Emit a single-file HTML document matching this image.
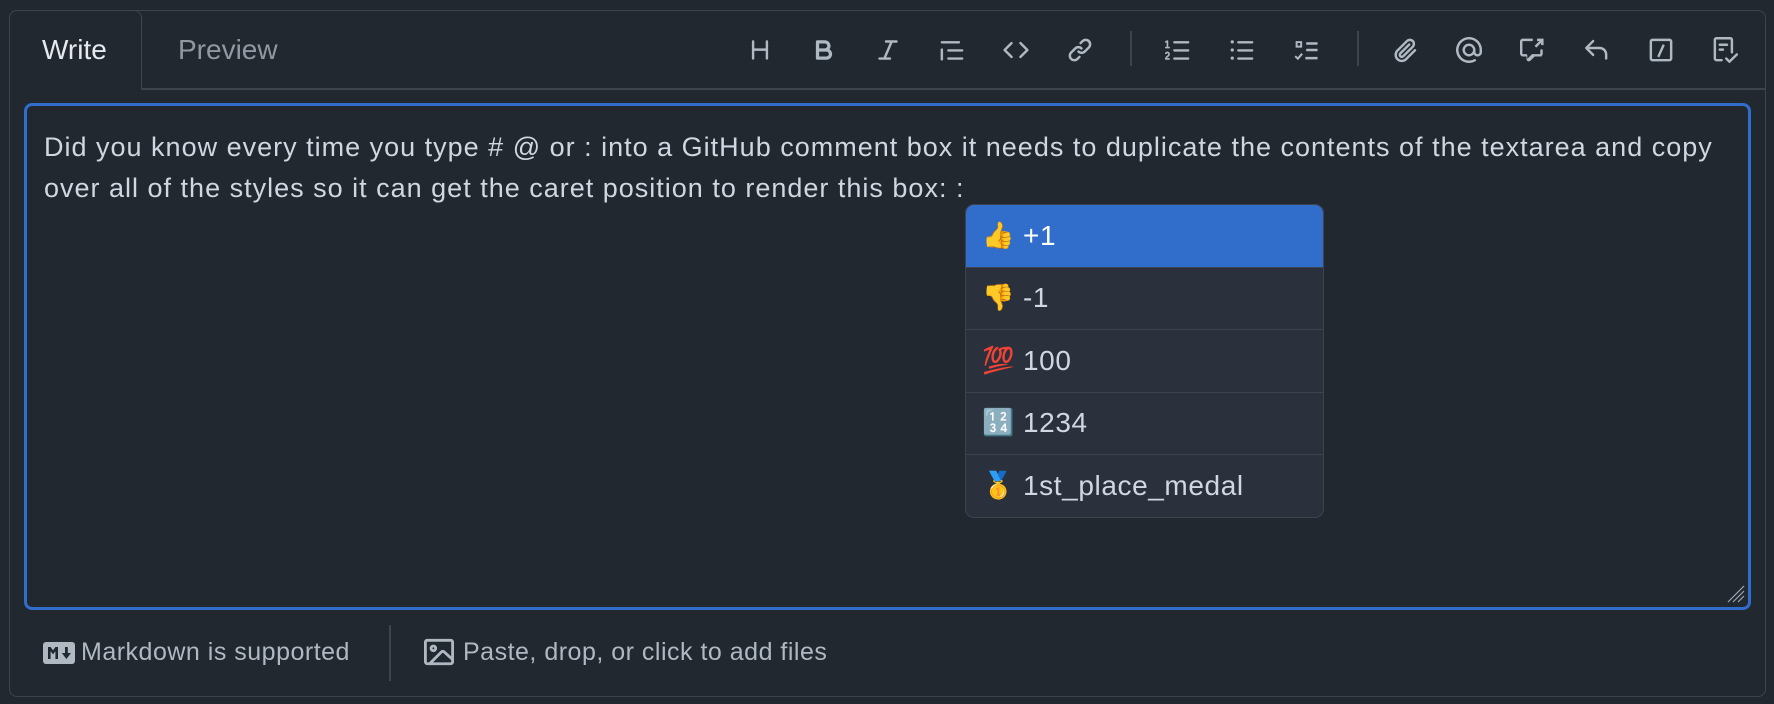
<!DOCTYPE html>
<html><head><meta charset="utf-8"><style>
*{box-sizing:border-box;margin:0;padding:0}
body{width:1774px;height:704px;background:#212830;font-family:"Liberation Sans",sans-serif;position:relative;overflow:hidden;color:#d1d7e0}
.box{position:absolute;left:9px;top:10px;width:1757px;height:687px;border:1.5px solid #3d444d;border-radius:8px}
.hdr{position:absolute;left:9px;top:88px;width:1757px;height:1.5px;background:#3d444d}
.tab{position:absolute;left:9px;top:10px;width:133px;height:80px;border:1.5px solid #3d444d;border-bottom:none;border-radius:8px 8px 0 0;background:#212830}
.t1{position:absolute;left:42px;top:34px;font-size:28px;color:#e6eaef}
.t2{position:absolute;left:178px;top:34px;font-size:28px;color:#9198a1}
.ic{position:absolute;top:37px;width:26px;height:26px;fill:#b0b8c2}
.sep{position:absolute;top:31px;width:1.5px;height:35px;background:#3d444d}
.ta{position:absolute;left:24px;top:103px;width:1727px;height:507px;border:3px solid #316dca;border-radius:8px}
.txt{position:absolute;left:44px;top:127px;font-size:27px;letter-spacing:1px;line-height:41px;color:#d1d7e0;white-space:nowrap}
.pop{position:absolute;left:965px;top:204px;width:359px;height:314px;border:1.5px solid #3d444d;border-radius:9px;background:#2a313c;overflow:hidden}
.row{height:62.5px;border-bottom:1.5px solid #3d444d;display:flex;align-items:center;padding-left:16px;font-size:28px;letter-spacing:0.6px;color:#d1d7e0}
.row:last-child{border-bottom:none}
.row.sel{background:#316dca;color:#fff}
.row .e{width:41px;font-size:26px;font-family:"Noto Color Emoji","DejaVu Sans",sans-serif}
.ft{position:absolute;top:638px;font-size:25px;letter-spacing:0.5px;color:#b0b8c2;display:flex;align-items:center}
.fsep{position:absolute;left:389px;top:625px;width:1.5px;height:56px;background:#3d444d}
</style></head><body>
<div class="box"></div>
<div class="hdr"></div>
<div class="tab"></div>
<div class="t1">Write</div>
<div class="t2">Preview</div>
<svg class="ic" style="left:747px" viewBox="0 0 16 16"><path d="M3.75 2a.75.75 0 0 1 .75.75V7h7V2.75a.75.75 0 0 1 1.5 0v10.5a.75.75 0 0 1-1.5 0V8.5h-7v4.75a.75.75 0 0 1-1.5 0V2.75A.75.75 0 0 1 3.75 2Z"/></svg>
<svg class="ic" style="left:811px" viewBox="0 0 16 16"><path d="M4 2h4.5a3.501 3.501 0 0 1 2.852 5.53A3.499 3.499 0 0 1 9.5 14H4a1 1 0 0 1-1-1V3a1 1 0 0 1 1-1Zm1 7v3h4.5a1.5 1.5 0 0 0 0-3Zm3.5-2a1.5 1.5 0 0 0 0-3H5v3Z"/></svg>
<svg class="ic" style="left:875px" viewBox="0 0 16 16"><path d="M6 2.75A.75.75 0 0 1 6.75 2h6.5a.75.75 0 0 1 0 1.5h-2.505l-3.858 9H9.25a.75.75 0 0 1 0 1.5h-6.5a.75.75 0 0 1 0-1.5h2.505l3.858-9H6.75A.75.75 0 0 1 6 2.75Z"/></svg>
<svg class="ic" style="left:939px" viewBox="0 0 16 16"><path d="M1.75 2.5h10.5a.75.75 0 0 1 0 1.5H1.75a.75.75 0 0 1 0-1.5Zm4 5h8.5a.75.75 0 0 1 0 1.5h-8.5a.75.75 0 0 1 0-1.5Zm0 5h8.5a.75.75 0 0 1 0 1.5h-8.5a.75.75 0 0 1 0-1.5ZM2.5 7.75v6a.75.75 0 0 1-1.5 0v-6a.75.75 0 0 1 1.5 0Z"/></svg>
<svg class="ic" style="left:1003px" viewBox="0 0 16 16"><path d="m11.28 3.22 4.25 4.25a.75.75 0 0 1 0 1.06l-4.25 4.25a.749.749 0 0 1-1.06-1.06L13.940 8l-3.72-3.72a.749.749 0 0 1 1.06-1.06Zm-6.56 0a.751.751 0 0 1 1.06 1.06L2.06 8l3.72 3.72a.749.749 0 0 1-1.06 1.06L.47 8.53a.75.75 0 0 1 0-1.06Z"/></svg>
<svg class="ic" style="left:1067px" viewBox="0 0 16 16"><path d="m7.775 3.275 1.25-1.25a3.5 3.5 0 1 1 4.95 4.95l-2.5 2.5a3.5 3.5 0 0 1-4.95 0 .751.751 0 0 1 1.06-1.060 2 2 0 0 0 2.83 0l2.5-2.5a2.002 2.002 0 0 0-2.83-2.830l-1.25 1.25a.751.751 0 0 1-1.06-1.06Zm-4.69 9.64a2 2 0 0 0 2.83 0l1.25-1.25a.751.751 0 0 1 1.06 1.06l-1.25 1.25a3.5 3.5 0 1 1-4.95-4.95l2.5-2.5a3.5 3.5 0 0 1 4.95 0 .751.751 0 0 1-1.06 1.06 2 2 0 0 0-2.83 0l-2.5 2.5a2 2 0 0 0 0 2.83Z"/></svg>
<div class="sep" style="left:1130px"></div>
<svg class="ic" style="left:1165px" viewBox="0 0 16 16"><path d="M5 3.25a.75.75 0 0 1 .75-.75h8.5a.75.75 0 0 1 0 1.5h-8.5A.75.75 0 0 1 5 3.25Zm0 5a.75.75 0 0 1 .75-.75h8.5a.75.75 0 0 1 0 1.5h-8.5A.75.75 0 0 1 5 8.25Zm0 5a.75.75 0 0 1 .75-.75h8.5a.75.75 0 0 1 0 1.5h-8.5a.75.75 0 0 1-.75-.75ZM.924 10.32a.5.5 0 0 1-.851-.525c.097-.144.215-.273.348-.384.228-.19.588-.392 1.068-.392.468 0 .858.181 1.126.484.259.294.377.673.377 1.038 0 .987-.686 1.495-1.156 1.845l-.047.035c-.303.225-.522.4-.654.597h1.357a.5.5 0 0 1 0 1H.5a.5.5 0 0 1-.5-.5c0-1.005.692-1.52 1.167-1.875l.035-.025c.531-.396.8-.625.8-1.078a.57.57 0 0 0-.128-.376C1.806 10.068 1.695 10 1.5 10a.658.658 0 0 0-.429.163.835.835 0 0 0-.144.153ZM2.003 2.5V6h.503a.5.5 0 0 1 0 1H.5a.5.5 0 0 1 0-1h.503V3.308l-.28.14a.5.5 0 0 1-.446-.895l1.003-.5a.5.5 0 0 1 .723.447Z"/></svg>
<svg class="ic" style="left:1229px" viewBox="0 0 16 16"><path d="M5.75 2.5h8.5a.75.75 0 0 1 0 1.5h-8.5a.75.75 0 0 1 0-1.5Zm0 5h8.5a.75.75 0 0 1 0 1.5h-8.5a.75.75 0 0 1 0-1.5Zm0 5h8.5a.75.75 0 0 1 0 1.5h-8.5a.75.75 0 0 1 0-1.5ZM2 14a1 1 0 1 1 0-2 1 1 0 0 1 0 2Zm1-6a1 1 0 1 1-2 0 1 1 0 0 1 2 0ZM2 4a1 1 0 1 1 0-2 1 1 0 0 1 0 2Z"/></svg>
<svg class="ic" style="left:1294px" viewBox="0 0 16 16"><path d="M1 2.5h4v4H1Zm1.2 1.2v1.6h1.6V3.7ZM7.5 3.25h7v1.5h-7Zm0 4h7v1.5h-7Zm-.5 5h7.5v1.5H7Zm-5.8-.9 1.1 1.1 2.2-2.6 1 .9-3.1 3.5-2.1-2Z"/></svg>
<div class="sep" style="left:1357px"></div>
<svg class="ic" style="left:1392px" viewBox="0 0 16 16"><path d="M12.212 3.02a1.753 1.753 0 0 0-2.478.003l-5.83 5.83a3.007 3.007 0 0 0-.88 2.127c0 .795.315 1.551.88 2.116.567.567 1.333.89 2.126.89.79 0 1.548-.321 2.116-.89l5.48-5.480a.75.75 0 0 1 1.061 1.060l-5.48 5.48a4.492 4.492 0 0 1-3.177 1.330c-1.2 0-2.345-.487-3.187-1.330a4.483 4.483 0 0 1-1.32-3.177c0-1.195.475-2.341 1.32-3.186l5.83-5.830a3.25 3.25 0 0 1 5.553 2.297c0 .863-.343 1.691-.953 2.301L7.439 12.390c-.375.377-.884.59-1.416.593a1.998 1.998 0 0 1-1.412-.587 1.992 1.992 0 0 1 0-2.828l5.48-5.48a.751.751 0 0 1 1.042.018.751.751 0 0 1 .018 1.042l-5.48 5.48a.492.492 0 0 0 0 .707.499.499 0 0 0 .352.146.51.51 0 0 0 .356-.144l5.833-5.827a1.755 1.755 0 0 0 0-2.481Z"/></svg>
<svg class="ic" style="left:1456px" viewBox="0 0 16 16"><path d="M4.75 2.37a6.501 6.501 0 0 0 6.5 11.26.75.75 0 0 1 .75 1.298A7.999 7.999 0 0 1 .989 4.148 8 8 0 0 1 16 7.75v1.5a2.75 2.75 0 0 1-5.072 1.475 3.999 3.999 0 0 1-6.650-4.190A4 4 0 0 1 12 8v1.25a1.25 1.25 0 0 0 2.5 0V7.867a6.5 6.5 0 0 0-9.75-5.496ZM10.5 8a2.5 2.5 0 1 0-5 0 2.5 2.5 0 0 0 5 0Z"/></svg>
<svg class="ic" style="left:1520px" viewBox="0 0 16 16"><path d="M1.75 1h5.5a.75.75 0 0 1 0 1.5h-5.5a.25.25 0 0 0-.25.25v7.5c0 .138.112.25.25.25h2c.199 0 .39.079.53.22.141.14.22.331.22.53v2.19l2.72-2.72a.75.75 0 0 1 .53-.22h4.5a.25.25 0 0 0 .25-.25v-2a.75.75 0 0 1 1.5 0v2c0 .464-.184.909-.513 1.237A1.746 1.746 0 0 1 13.25 12H9.06l-2.573 2.573A1.457 1.457 0 0 1 4 13.543V12H1.75A1.75 1.75 0 0 1 0 10.25v-7.5C0 1.784.784 1 1.75 1ZM14.5 1h-4v1.5h1.44L8.970 5.470l1.060 1.060L13 3.560V5h1.5Z"/></svg>
<svg class="ic" style="left:1583px" viewBox="0 0 16 16"><path d="M6.78 1.97a.75.75 0 0 1 0 1.06L3.81 6h6.44A4.75 4.75 0 0 1 15 10.75v2.5a.75.75 0 0 1-1.5 0v-2.5a3.25 3.25 0 0 0-3.25-3.25H3.81l2.97 2.97a.749.749 0 0 1-1.06 1.06L1.47 7.28a.75.75 0 0 1 0-1.06l4.25-4.25a.75.75 0 0 1 1.06 0Z"/></svg>
<svg class="ic" style="left:1648px" viewBox="0 0 16 16"><path d="M2.75 1h10.5c.966 0 1.75.784 1.75 1.75v10.5A1.75 1.75 0 0 1 13.25 15H2.75A1.75 1.75 0 0 1 1 13.25V2.75C1 1.784 1.784 1 2.75 1Zm0 1.5a.25.25 0 0 0-.25.25v10.5c0 .138.112.25.25.25h10.5a.25.25 0 0 0 .25-.25V2.75a.25.25 0 0 0-.25-.25Zm6.3 1.9 1.3.7-3.4 7.5-1.3-.7Z"/></svg>
<svg class="ic" style="left:1712px" viewBox="0 0 16 16"><path d="M2.5 1.75v11.5c0 .138.112.25.25.25h3.17a.75.75 0 0 1 0 1.5H2.75A1.75 1.75 0 0 1 1 13.25V1.75C1 .784 1.784 0 2.75 0h8.5C12.216 0 13 .784 13 1.75v7.736a.75.75 0 0 1-1.5 0V1.75a.25.25 0 0 0-.25-.25h-8.5a.25.25 0 0 0-.25.25Zm13.274 9.537-4.557 4.45a.75.75 0 0 1-1.055-.008l-1.943-1.950a.75.75 0 0 1 1.062-1.058l1.419 1.425 4.026-3.932a.75.75 0 1 1 1.048 1.074ZM4.75 4h4.5a.75.75 0 0 1 0 1.5h-4.5a.75.75 0 0 1 0-1.5ZM4 7.75A.75.75 0 0 1 4.75 7h2a.75.75 0 0 1 0 1.5h-2A.75.75 0 0 1 4 7.75Z"/></svg>

<div class="ta"></div>
<svg style="position:absolute;left:1722px;top:580px" width="24" height="24" viewBox="0 0 24 24"><path d="M22 6L6 22M22 11L11 22M22 16L16 22" stroke="#9ea7b3" stroke-width="1.2"/></svg>
<div class="txt">Did you know every time you type # @ or : into a GitHub comment box it needs to duplicate the contents of the textarea and copy<br>over all of the styles so it can get the caret position to render this box: :</div>

<div class="pop">
<div class="row sel"><span class="e">👍</span>+1</div>
<div class="row"><span class="e">👎</span>-1</div>
<div class="row"><span class="e">💯</span>100</div>
<div class="row"><span class="e">🔢</span>1234</div>
<div class="row"><span class="e">🥇</span>1st_place_medal</div>
</div>

<div class="ft" style="left:43px"><svg width="32" height="22" viewBox="0 0 16 11" style="margin-right:6px"><rect x="0" y="0" width="16" height="11" rx="1.5" fill="#b0b8c2"/><path d="M2.5 8.5v-6h1.3l1.2 1.7 1.2-1.7h1.3v6H6.2V4.6L5 6.2 3.8 4.6v3.9ZM11 2.5h1.4v3h1.6l-2.3 3-2.3-3H11Z" fill="#212830"/></svg>Markdown is supported</div>
<div class="fsep"></div>
<div class="ft" style="left:424px;top:637px"><svg width="30" height="30" viewBox="0 0 16 16" style="margin-right:9px" fill="#b0b8c2"><path d="M16 13.25A1.75 1.75 0 0 1 14.25 15H1.75A1.75 1.75 0 0 1 0 13.25V2.75C0 1.784.784 1 1.75 1h12.5c.966 0 1.75.784 1.75 1.75ZM1.75 2.5a.25.25 0 0 0-.25.25v10.5c0 .138.112.25.25.25h.94l.03-.03 6.077-6.078a1.75 1.75 0 0 1 2.412-.06L14.5 10.31V2.75a.25.25 0 0 0-.25-.25Zm12.5 11a.25.25 0 0 0 .25-.25v-.917l-4.298-3.889a.25.25 0 0 0-.344.009L4.81 13.5ZM7 6a2 2 0 1 1-3.999.001A2 2 0 0 1 7 6ZM5.5 6a.5.5 0 1 0-1 0 .5.5 0 0 0 1 0Z"/></svg>Paste, drop, or click to add files</div>
</body></html>
